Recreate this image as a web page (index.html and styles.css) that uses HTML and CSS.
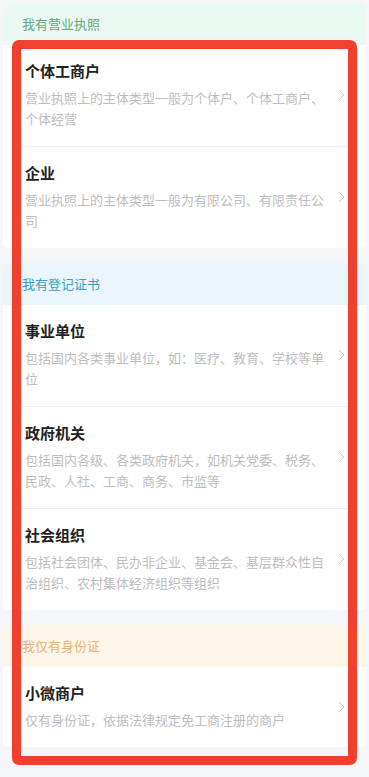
FILE: index.html
```html
<!DOCTYPE html>
<html lang="zh-CN">
<head>
<meta charset="utf-8">
<link rel="stylesheet" href="styles.css">
</head>
<body>
<div class="page">
  <section class="card">
    <div class="card-head head-green">我有营业执照</div>
    <div class="item">
      <div class="item-text">
        <div class="item-title">个体工商户</div>
        <div class="item-desc">营业执照上的主体类型一般为个体户、个体工商户、个体经营</div>
      </div>
      <svg class="chev" width="7" height="12" viewBox="0 0 7 12"><polyline points="1,1 6,6 1,11" fill="none" stroke="#c8c8c8" stroke-width="1"/></svg>
    </div>
    <div class="sep"></div>
    <div class="item">
      <div class="item-text">
        <div class="item-title">企业</div>
        <div class="item-desc">营业执照上的主体类型一般为有限公司、有限责任公司</div>
      </div>
      <svg class="chev" width="7" height="12" viewBox="0 0 7 12"><polyline points="1,1 6,6 1,11" fill="none" stroke="#c8c8c8" stroke-width="1"/></svg>
    </div>
  </section>

  <section class="card">
    <div class="card-head head-blue">我有登记证书</div>
    <div class="item">
      <div class="item-text">
        <div class="item-title">事业单位</div>
        <div class="item-desc">包括国内各类事业单位，如：医疗、教育、学校等单位</div>
      </div>
      <svg class="chev" width="7" height="12" viewBox="0 0 7 12"><polyline points="1,1 6,6 1,11" fill="none" stroke="#c8c8c8" stroke-width="1"/></svg>
    </div>
    <div class="sep"></div>
    <div class="item">
      <div class="item-text">
        <div class="item-title">政府机关</div>
        <div class="item-desc">包括国内各级、各类政府机关，如机关党委、税务、民政、人社、工商、商务、市监等</div>
      </div>
      <svg class="chev" width="7" height="12" viewBox="0 0 7 12"><polyline points="1,1 6,6 1,11" fill="none" stroke="#c8c8c8" stroke-width="1"/></svg>
    </div>
    <div class="sep"></div>
    <div class="item">
      <div class="item-text">
        <div class="item-title">社会组织</div>
        <div class="item-desc">包括社会团体、民办非企业、基金会、基层群众性自治组织、农村集体经济组织等组织</div>
      </div>
      <svg class="chev" width="7" height="12" viewBox="0 0 7 12"><polyline points="1,1 6,6 1,11" fill="none" stroke="#c8c8c8" stroke-width="1"/></svg>
    </div>
  </section>

  <section class="card">
    <div class="card-head head-orange">我仅有身份证</div>
    <div class="item">
      <div class="item-text">
        <div class="item-title">小微商户</div>
        <div class="item-desc">仅有身份证，依据法律规定免工商注册的商户</div>
      </div>
      <svg class="chev" width="7" height="12" viewBox="0 0 7 12"><polyline points="1,1 6,6 1,11" fill="none" stroke="#c8c8c8" stroke-width="1"/></svg>
    </div>
  </section>

  <div class="highlight"></div>
</div>
</body>
</html>
```

FILE: styles.css
```css
html, body {
  margin: 0;
  padding: 0;
  background: #f5f6f7;
}
body {
  font-family: "Noto Sans CJK SC", "Noto Sans", sans-serif;
}
.page {
  position: relative;
  padding: 3px 3px 0 3px;
  width: 363px;
  height: 774px;
  overflow: hidden;
}
.card {
  background: #ffffff;
  border-radius: 6px;
  overflow: hidden;
  margin-bottom: 15px;
}
.card-head {
  height: 42px;
  line-height: 42px;
  padding-left: 19px;
  font-size: 13px;
}
.head-green {
  background: #eafaf3;
  color: #64a887;
}
.head-blue {
  background: #eaf5fd;
  color: #3f9cc6;
}
.head-orange {
  background: #fff5e9;
  color: #e6b476;
}
.item {
  display: flex;
  align-items: center;
  padding: 16px 21px 17px 22px;
}
.item-text {
  flex: 1;
  min-width: 0;
  margin-right: 9px;
}
.item-title {
  font-size: 15px;
  line-height: 20px;
  font-weight: 700;
  color: #222222;
}
.item-desc {
  margin-top: 6px;
  font-size: 13px;
  line-height: 21px;
  color: #bdbdbd;
}
.chev {
  flex: none;
  display: block;
}
.sep {
  height: 1px;
  background: #efefef;
  margin: 0 19px;
}
.highlight {
  position: absolute;
  left: 12px;
  top: 40px;
  width: 345px;
  height: 725px;
  box-sizing: border-box;
  border: 9px solid #f2402f;
  border-radius: 7px;
  pointer-events: none;
}
```
